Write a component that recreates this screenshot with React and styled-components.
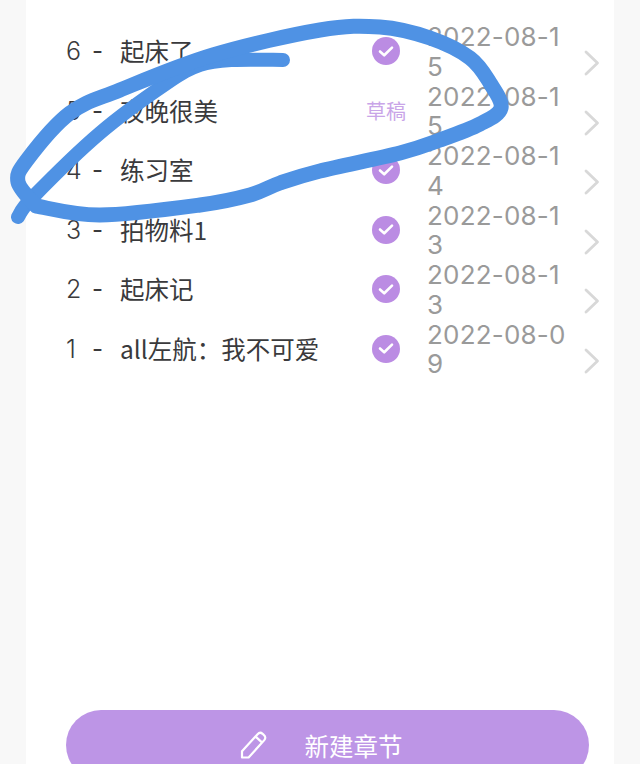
import React from "react";
import styled, { createGlobalStyle } from "styled-components";

const chapters = [
  { no: 6, title: "起床了", date: "2022-08-15", done: true },
  { no: 5, title: "夜晚很美", date: "2022-08-15", done: false },
  { no: 4, title: "练习室", date: "2022-08-14", done: true },
  { no: 3, title: "拍物料1", date: "2022-08-13", done: true },
  { no: 2, title: "起床记", date: "2022-08-13", done: true },
  { no: 1, title: "all左航：我不可爱", date: "2022-08-09", done: true },
];

// the hand-drawn circle, as points read off the picture
const innerStroke = [
  [283, 60], [233, 60], [200, 65], [167, 83], [100, 133], [33, 197], [18, 217],
];
const outerStroke = [
  [36, 206], [18, 182], [27, 160], [70, 113], [120, 90], [213, 55], [320, 30],
  [380, 27], [430, 38], [470, 58], [490, 83], [501, 108], [480, 124], [440, 140],
  [400, 153], [320, 171], [280, 183], [250, 195], [200, 205], [100, 215], [36, 206],
];

// smooth curve through the points (catmull-rom to bezier)
function smooth(pts) {
  let d = `M${pts[0][0]} ${pts[0][1]}`;
  for (let i = 0; i < pts.length - 1; i++) {
    const p0 = pts[i - 1] || pts[i];
    const p1 = pts[i];
    const p2 = pts[i + 1];
    const p3 = pts[i + 2] || p2;
    const c1x = p1[0] + (p2[0] - p0[0]) / 6;
    const c1y = p1[1] + (p2[1] - p0[1]) / 6;
    const c2x = p2[0] - (p3[0] - p1[0]) / 6;
    const c2y = p2[1] - (p3[1] - p1[1]) / 6;
    d += `C${c1x} ${c1y} ${c2x} ${c2y} ${p2[0]} ${p2[1]}`;
  }
  return d;
}

const GlobalStyle = createGlobalStyle`
  html, body {
    margin: 0;
    height: 100%;
    overflow: hidden;
    background: #f8f8f8;
  }
`;

function CheckBadge() {
  return (
    <Badge>
      <svg width="16" height="13" viewBox="0 0 16 13" fill="none">
        <path d="M2 6.5l4.2 3.8L14 2.6" stroke="#fff" strokeWidth="2.6" strokeLinecap="round" strokeLinejoin="round" />
      </svg>
    </Badge>
  );
}

function Row({ no, title, date, done }) {
  return (
    <RowWrap>
      <Title>
        <No>{no}</No>
        <Dash>-</Dash>
        <span>{title}</span>
      </Title>
      <Status>{done ? <CheckBadge /> : <Draft>草稿</Draft>}</Status>
      <DateText>{date}</DateText>
      <Chevron width="16" height="26" viewBox="0 0 16 26" fill="none">
        <path d="M2 2l11.5 11L2 24" stroke="#d8d8d8" strokeWidth="2.8" strokeLinecap="round" strokeLinejoin="round" />
      </Chevron>
    </RowWrap>
  );
}

export default function App() {
  return (
    <Page>
      <GlobalStyle />
      <Card>
        <List>
          {chapters.map((c) => (
            <Row key={c.no} {...c} />
          ))}
        </List>
        <NewButton>
          <svg width="30" height="30" viewBox="0 0 30 30" fill="none">
            <path
              d="M3 27.5v-6.2L18.6 4.2c1.4-1.6 3.4-1.8 5-.4l1.4 1.3c1.6 1.4 1.7 3.4.3 5L9.6 27.5H3zM16.6 6.6l6.6 6"
              stroke="#fff"
              strokeWidth="2.2"
              strokeLinejoin="round"
            />
          </svg>
          <ButtonLabel>新建章节</ButtonLabel>
        </NewButton>
      </Card>
      <Scribble width="640" height="764" viewBox="0 0 640 764" fill="none">
        <path d={smooth(innerStroke)} stroke="#4f92e4" strokeWidth="14" strokeLinecap="round" strokeLinejoin="round" />
        <path d={smooth(outerStroke)} stroke="#4f92e4" strokeWidth="15" strokeLinecap="round" strokeLinejoin="round" />
      </Scribble>
    </Page>
  );
}

const Page = styled.div`
  position: relative;
  width: 640px;
  height: 764px;
  overflow: hidden;
  display: flex;
  justify-content: center;
  font-family: "Noto Sans CJK SC", "Noto Sans", sans-serif;
`;

const Card = styled.div`
  width: 588px;
  height: 764px;
  background: #fff;
  display: flex;
  flex-direction: column;
  padding: 22px 14px 0 40px;
  box-sizing: border-box;
`;

const List = styled.div`
  display: flex;
  flex-direction: column;
  flex: 1;
`;

const RowWrap = styled.div`
  display: flex;
  align-items: flex-start;
  height: 59.5px;
`;

const Title = styled.div`
  flex: 1;
  min-width: 0;
  display: flex;
  align-items: center;
  height: 58px;
  font-size: 24.5px;
  line-height: 30px;
  color: #3a3a3c;
  white-space: nowrap;
`;

const No = styled.span`
  width: 26px;
  font-family: "Inter", sans-serif;
  font-size: 25px;
  font-weight: 300;
`;

const Dash = styled.span`
  width: 28px;
  font-family: "Inter", sans-serif;
  font-size: 24px;
`;

const Status = styled.div`
  width: 60px;
  height: 58px;
  display: flex;
  align-items: center;
  justify-content: center;
`;

const Badge = styled.div`
  width: 28px;
  height: 28px;
  border-radius: 50%;
  background: #bb8ce3;
  display: flex;
  align-items: center;
  justify-content: center;
`;

const Draft = styled.span`
  font-size: 20px;
  color: #c9a5e8;
  white-space: nowrap;
`;

const DateText = styled.div`
  width: 141px;
  margin-left: 11px;
  font-family: "Inter", sans-serif;
  font-size: 26px;
  font-weight: 400;
  line-height: 29.5px;
  letter-spacing: 0.2px;
  color: #9a9a9a;
  word-break: break-all;
`;

const Chevron = styled.svg`
  margin: 28px 0 0 16px;
  flex-shrink: 0;
`;

const NewButton = styled.div`
  flex-shrink: 0;
  width: 523px;
  height: 70px;
  margin-bottom: -16px;
  border-radius: 36px;
  background: #bd95e6;
  display: flex;
  align-items: center;
  justify-content: center;
  gap: 36px;
  padding-right: 14px;
  box-sizing: border-box;
`;

const ButtonLabel = styled.span`
  font-size: 24.5px;
  color: #fff;
`;

const Scribble = styled.svg`
  position: absolute;
  top: 0;
  left: 0;
  pointer-events: none;
`;
